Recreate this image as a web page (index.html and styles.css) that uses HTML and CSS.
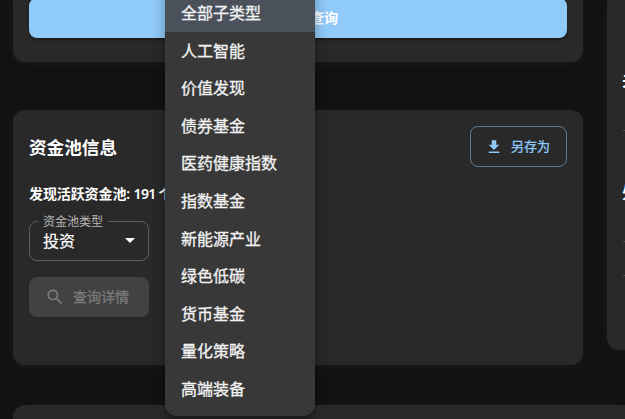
FILE: index.html
```html
<!DOCTYPE html>
<html lang="zh-CN">
<head>
<meta charset="utf-8">
<title>资金池信息</title>
<link rel="stylesheet" href="styles.css">
</head>
<body>
<main class="page">
  <div class="columns">
    <div class="left">
      <section class="card query-card"><button class="query-btn">查询</button></section>
      <section class="card pool-card">
        <header class="pool-head">
          <h2>资金池信息</h2>
          <button class="save-btn">
            <svg width="18" height="18" viewBox="0 0 24 24"><path fill="currentColor" d="M19 9h-4V3H9v6H5l7 7zM5 18v2h14v-2z"/></svg>
            <span>另存为</span>
          </button>
        </header>
        <p class="count">发现活跃资金池: <span class="num">191 </span>个</p>
        <fieldset class="select">
          <legend>资金池类型</legend>
          <span class="value">投资</span>
          <svg width="24" height="24" viewBox="0 0 24 24"><path fill="currentColor" d="M7 10l5 5 5-5z"/></svg>
        </fieldset>
        <button class="detail-btn" disabled>
          <svg width="20" height="20" viewBox="0 0 24 24"><path fill="currentColor" d="M15.5 14h-.79l-.28-.27C15.41 12.59 16 11.11 16 9.5 16 5.91 13.09 3 9.5 3S3 5.91 3 9.5 5.91 16 9.5 16c1.61 0 3.09-.59 4.23-1.57l.27.28v.79l5 4.99L20.49 19zm-6 0C7.01 14 5 11.99 5 9.5S7.01 5 9.5 5 14 7.01 14 9.5 11.99 14 9.5 14"/></svg>
          <span>查询详情</span>
        </button>
      </section>
    </div>
    <aside class="card side">
      <h3>关</h3>
      <div class="panel first"></div>
      <h3>处</h3>
      <div class="panel second"><div class="row"></div></div>
    </aside>
  </div>
  <section class="card bottom"></section>
</main>
<ul class="menu">
  <li class="selected">全部子类型</li>
  <li>人工智能</li>
  <li>价值发现</li>
  <li>债券基金</li>
  <li>医药健康指数</li>
  <li>指数基金</li>
  <li>新能源产业</li>
  <li>绿色低碳</li>
  <li>货币基金</li>
  <li>量化策略</li>
  <li>高端装备</li>
</ul>
</body>
</html>
```

FILE: styles.css
```css
* { box-sizing: border-box; }
html, body { height: 100%; }
body {
  margin: 0;
  overflow: hidden;
  background: #121212;
  color: #fff;
  font-family: "Noto Sans", "Noto Sans CJK SC", sans-serif;
}
button { font-family: inherit; margin: 0; padding: 0; }
svg { display: block; flex: none; }
.page { width: 100%; height: 419px; overflow: hidden; padding-left: 13px; }
.columns { display: flex; gap: 24px; align-items: flex-start; margin-bottom: 40px; }
.left { flex: none; width: 570px; display: flex; flex-direction: column; gap: 48px; }
.card {
  background: #292929;
  border-radius: 12px;
  box-shadow: 0 2px 12px rgba(255, 255, 255, .035);
}
.query-card { height: 62px; padding: 0 16px; border-radius: 0 0 12px 12px; }
.query-btn {
  display: block;
  width: 538px;
  height: 40px;
  margin-top: -2px;
  border: 0;
  border-radius: 8px;
  background: #90caf9;
  color: #fff;
  font-size: 14px;
  font-weight: 700;
  line-height: 40px;
  padding-left: 52px;
  box-shadow: 0 2px 3px rgba(0, 0, 0, .4);
}
.pool-card { height: 255px; padding: 16px; }
.pool-head { display: flex; justify-content: space-between; height: 41px; }
h2 { margin: 7px 0 0; font-size: 17.6px; line-height: 28px; font-weight: 700; }
.save-btn {
  width: 97px;
  height: 41px;
  display: flex;
  align-items: center;
  gap: 8px;
  padding: 0 0 2px 14px;
  background: none;
  border: 1px solid #5b7b95;
  border-radius: 8px;
  color: #90caf9;
  font-size: 13px;
  -webkit-text-stroke: .3px currentColor;
}
.save-btn svg { margin-top: 2px; }
.count { margin: 16px 0 0; font-size: 14px; line-height: 22px; font-weight: 600; letter-spacing: -.1px; white-space: nowrap; }
.num { letter-spacing: -.7px; }
.select {
  width: 120px;
  height: 47px;
  margin: 9px 0 16px;
  padding: 0 6px 0 13px;
  border: 1px solid #5e5e5e;
  border-radius: 8px;
  display: flex;
  align-items: flex-start;
  justify-content: space-between;
  min-width: 0;
}
.select legend { margin-left: -5px; padding: 1px 5px 0; font-size: 12px; line-height: 13px; color: #b8b8b8; white-space: nowrap; }
.value { font-size: 16px; line-height: 26px; -webkit-text-stroke: .2px currentColor; }
.detail-btn {
  width: 120px;
  height: 40px;
  display: flex;
  align-items: center;
  gap: 8px;
  padding: 0 0 2px 16px;
  border: 0;
  border-radius: 8px;
  background: #424242;
  color: #7b7b7b;
  font-size: 14px;
}
.detail-btn svg { margin-top: 2px; }
.detail-btn span { -webkit-text-stroke: .3px currentColor; }
.side { flex: none; width: 18px; height: 350px; padding: 66px 0 0 15px; border-radius: 0 0 0 12px; overflow: hidden; }
h3 { margin: 0; width: 16px; font-size: 16px; line-height: 28px; font-weight: 700; }
.panel { margin-left: 1px; }
.first { height: 84px; padding-top: 36px; }
.first::before { content: ""; display: block; height: 1px; background: #555; }
.second { padding-top: 35px; }
.row { height: 35px; border: solid #555; border-width: 1px 0; }
.bottom { height: 14px; border-radius: 12px 0 0 0; }
.menu {
  position: absolute;
  left: 165px;
  top: -14px;
  width: 150px;
  height: 430px;
  margin: 0;
  padding: 8px 0 0;
  list-style: none;
  background: #383838;
  border-radius: 0 0 12px 12px;
  box-shadow: 0 5px 5px -3px rgba(0,0,0,.2), 0 8px 10px 1px rgba(0,0,0,.14), 0 3px 14px 2px rgba(0,0,0,.12);
}
.menu li { height: 37.6px; padding: 1px 0 0 16px; font-size: 16px; line-height: 37.6px; color: #f2f2f2; -webkit-text-stroke: .3px currentColor; }
.menu .selected { background: #4a515a; }
```
